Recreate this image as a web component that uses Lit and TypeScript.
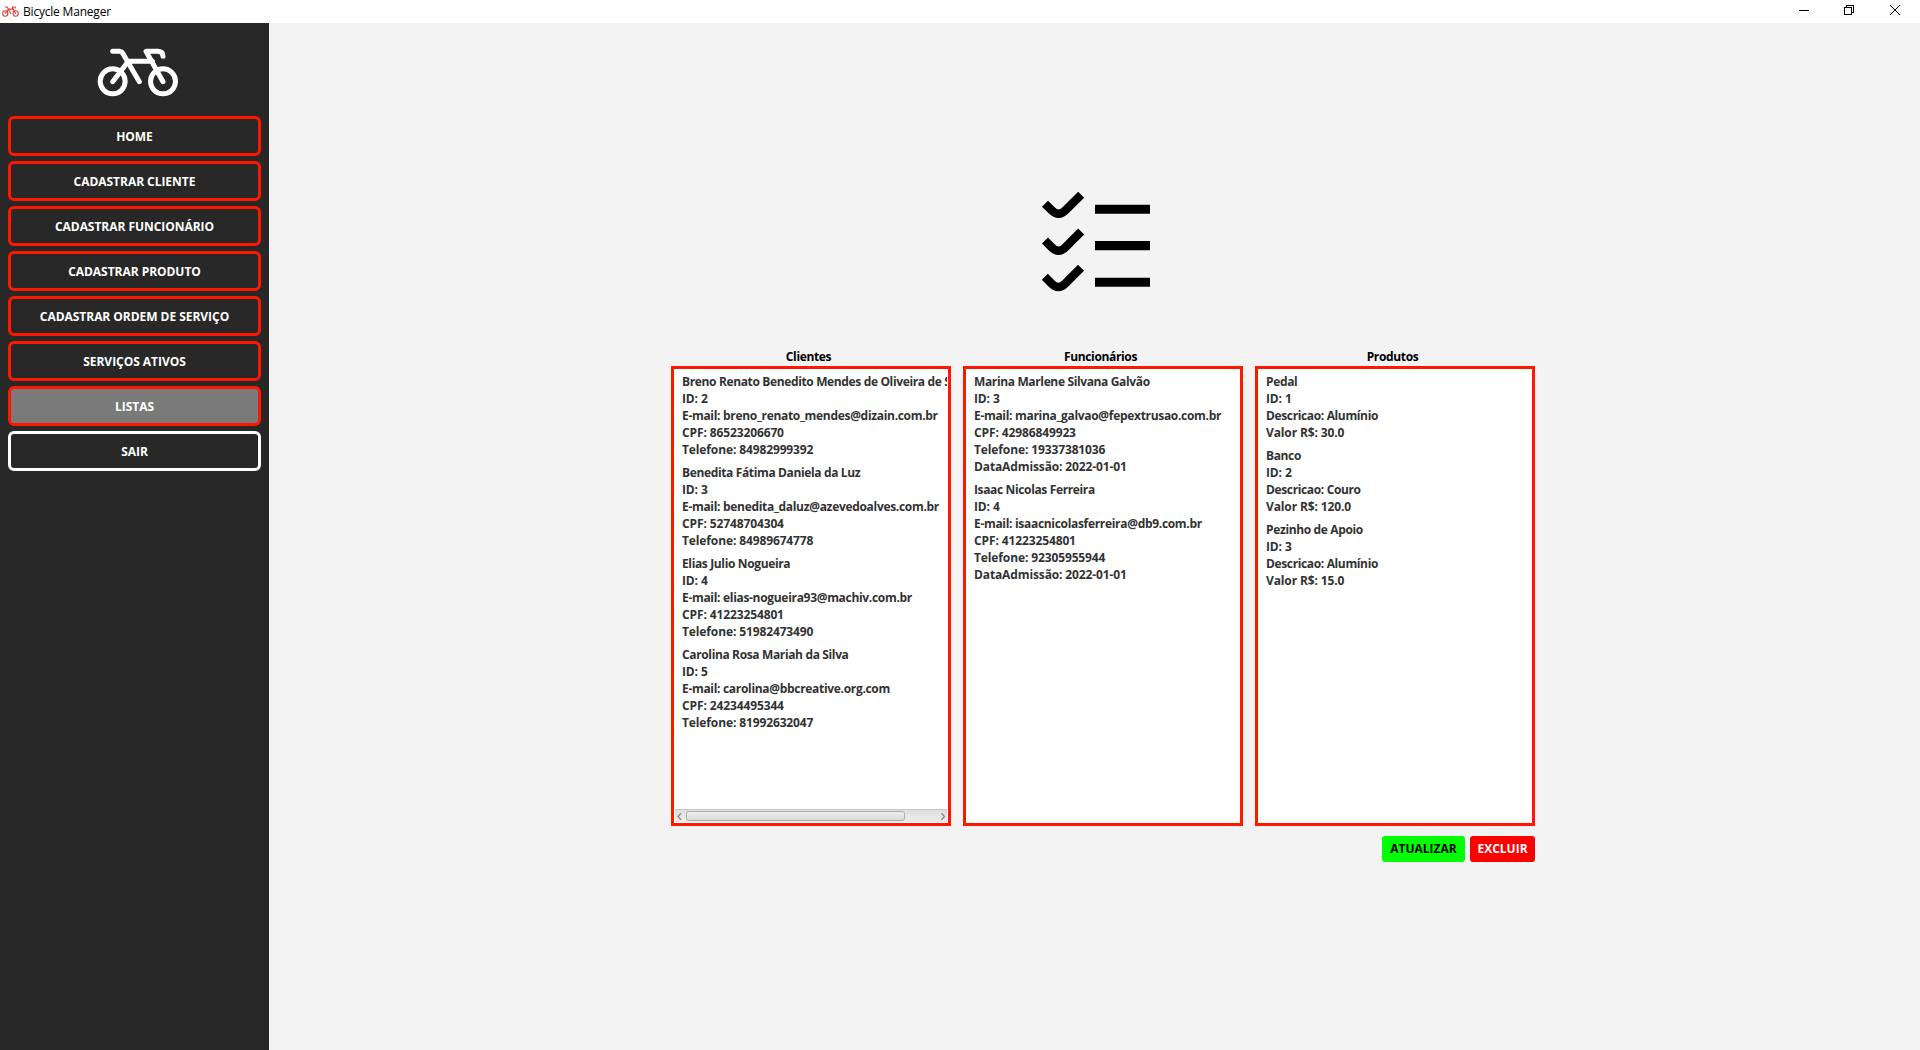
import { LitElement, html, css, svg } from "lit";
import { customElement, property } from "lit/decorators.js";
import { classMap } from "lit/directives/class-map.js";

const bike = svg`
  <g fill="none" stroke="currentColor" stroke-width="15" stroke-linecap="round" stroke-linejoin="round">
    <circle cx="98" cy="153" r="37.5"/>
    <circle cx="249" cy="153" r="37.5"/>
    <path d="M98 154 L145 93 H217"/>
    <path d="M98 63 H118 Q125 63 129 70 L178 154"/>
    <path d="M249 154 L198 63 H234 Q249 64 249 78"/>
  </g>`;

interface NavItem {
  label: string;
  kind?: "active" | "exit";
}

const NAV: NavItem[] = [
  { label: "HOME" },
  { label: "CADASTRAR CLIENTE" },
  { label: "CADASTRAR FUNCIONÁRIO" },
  { label: "CADASTRAR PRODUTO" },
  { label: "CADASTRAR ORDEM DE SERVIÇO" },
  { label: "SERVIÇOS ATIVOS" },
  { label: "LISTAS", kind: "active" },
  { label: "SAIR", kind: "exit" },
];

const CLIENTES = [
  ["Breno Renato Benedito Mendes de Oliveira de Souza", "ID: 2", "E-mail: breno_renato_mendes@dizain.com.br", "CPF: 86523206670", "Telefone: 84982999392"],
  ["Benedita Fátima Daniela da Luz", "ID: 3", "E-mail: benedita_daluz@azevedoalves.com.br", "CPF: 52748704304", "Telefone: 84989674778"],
  ["Elias Julio Nogueira", "ID: 4", "E-mail: elias-nogueira93@machiv.com.br", "CPF: 41223254801", "Telefone: 51982473490"],
  ["Carolina Rosa Mariah da Silva", "ID: 5", "E-mail: carolina@bbcreative.org.com", "CPF: 24234495344", "Telefone: 81992632047"],
];

const FUNCIONARIOS = [
  ["Marina Marlene Silvana Galvão", "ID: 3", "E-mail: marina_galvao@fepextrusao.com.br", "CPF: 42986849923", "Telefone: 19337381036", "DataAdmissão: 2022-01-01"],
  ["Isaac Nicolas Ferreira", "ID: 4", "E-mail: isaacnicolasferreira@db9.com.br", "CPF: 41223254801", "Telefone: 92305955944", "DataAdmissão: 2022-01-01"],
];

const PRODUTOS = [
  ["Pedal", "ID: 1", "Descricao: Alumínio", "Valor R$: 30.0"],
  ["Banco", "ID: 2", "Descricao: Couro", "Valor R$: 120.0"],
  ["Pezinho de Apoio", "ID: 3", "Descricao: Alumínio", "Valor R$: 15.0"],
];

@customElement("record-list")
class RecordList extends LitElement {
  @property() heading = "";
  @property({ attribute: false }) records: string[][] = [];
  @property({ type: Boolean }) scroll = false;

  static styles = css`
    :host { display: flex; flex-direction: column; width: 280px; }
    .heading {
      height: 17px; line-height: 17px; text-align: center; color: #000; margin-bottom: 1px;
      padding-right: 5px; letter-spacing: -0.35px;
    }
    .box {
      box-sizing: border-box; height: 460px; border: 3px solid #ff1700; background: #fff;
      padding: 1px; display: flex; flex-direction: column; color: #323232;
    }
    .cells { flex: 1; overflow: hidden; }
    .cell { padding: 3px 7px; }
    .line { height: 17px; line-height: 17px; white-space: pre; letter-spacing: -0.36px; }
    .line.email { letter-spacing: -0.31px; }
    .line.numeric { letter-spacing: -0.12px; }
    .bar {
      height: 13px; box-sizing: border-box; border-top: 1px solid #c8c8c8; display: flex; align-items: center;
      background: linear-gradient(#dedede, #ececec);
    }
    .thumb {
      box-sizing: border-box; width: 219px; height: 10px; border: 1px solid #adadad; border-radius: 2.5px;
      background: linear-gradient(#efefef, #d9d9d9);
    }
    .arrow { width: 11px; height: 9px; flex: none; }
    .space { flex: 1; }
  `;

  private line(text: string) {
    const numeric = /: [\d.-]+$/.test(text);
    const email = text.includes("@");
    return html`<div class=${classMap({ line: true, numeric, email })}>${text}</div>`;
  }

  render() {
    return html`
      <div class="heading">${this.heading}</div>
      <div class="box">
        <div class="cells">
          ${this.records.map((r) => html`<div class="cell">${r.map((l) => this.line(l))}</div>`)}
        </div>
        ${this.scroll
          ? html`<div class="bar">
              <svg class="arrow" viewBox="0 0 11 9"><path d="M6 1.2 L3 4.5 L6 7.8" fill="none" stroke="#8a8a8a" stroke-width="1.3"/></svg>
              <div class="thumb"></div>
              <div class="space"></div>
              <svg class="arrow" viewBox="0 0 11 9"><path d="M5.5 1.2 L8.5 4.5 L5.5 7.8" fill="none" stroke="#8a8a8a" stroke-width="1.3"/></svg>
            </div>`
          : null}
      </div>`;
  }
}

@customElement("app-root")
class AppRoot extends LitElement {
  static styles = css`
    :host {
      display: flex; flex-direction: column; width: 1920px; height: 1050px; overflow: hidden;
      background: #f3f3f3; font-family: "Open Sans", "Noto Sans", sans-serif; font-size: 12px; font-weight: 700;
    }
    .titlebar { height: 23px; background: #fff; display: flex; align-items: center; flex: none; }
    .title-icon { width: 17px; height: 11px; margin-left: 2px; color: #e5352b; }
    .title { margin-left: 4px; font-size: 12px; font-weight: 400; color: #000; flex: 1; letter-spacing: -0.2px; }
    .controls { width: 138px; height: 23px; flex: none; }
    .body { flex: 1; display: flex; }
    .sidebar {
      width: 269px; background: #282828; box-sizing: border-box; padding: 25px 8px 0;
      display: flex; flex-direction: column; align-items: center; flex: none;
    }
    .logo { width: 82px; height: 50px; color: #fff; margin: 0 0 18px 7px; }
    .nav { display: flex; flex-direction: column; gap: 5px; width: 253px; }
    .item {
      box-sizing: border-box; height: 40px; border: 3px solid #ff1700; border-radius: 6px;
      display: flex; align-items: center; justify-content: center; color: #fff; letter-spacing: -0.04px;
    }
    .item.active { background: #7a7a7a; }
    .item.exit { border-color: #fff; }
    .main { flex: 1; display: flex; flex-direction: column; padding: 168px 0 0 402px; }
    .checks { width: 110px; height: 102px; margin: 0 0 55px 370px; display: block; }
    .lists { display: flex; gap: 12px; }
    .actions { display: flex; justify-content: flex-end; gap: 5px; width: 864px; margin-top: 10px; }
    .btn {
      box-sizing: border-box; height: 26px; padding-bottom: 1px; border-radius: 3px; letter-spacing: 0;
      display: flex; align-items: center; justify-content: center;
    }
    .update { width: 83px; background: #00ff00; color: #000; }
    .delete { width: 65px; background: #ff0000; color: #fff; }
  `;

  render() {
    const tick = svg`<path d="M75 102 L95 122 Q115.6 142.8 136.5 122 L183.5 75" fill="none" stroke="#000" stroke-width="25.5"/>`;
    return html`
      <div class="titlebar">
        <svg class="title-icon" viewBox="50 50 248 152" preserveAspectRatio="none">${bike}</svg>
        <div class="title">Bicycle Maneger</div>
        <svg class="controls" viewBox="0 0 138 23" fill="none" stroke="#000" shape-rendering="crispEdges">
          <path d="M17 10.5 H27"/>
          <path d="M62.5 7.5 H69.5 V14.5 H62.5 Z M64.5 7.5 V5.5 H71.5 V12.5 H69.5"/>
          <path d="M108 5 L118 15 M118 5 L108 15" shape-rendering="auto"/>
        </svg>
      </div>
      <div class="body">
        <div class="sidebar">
          <svg class="logo" viewBox="51 53 246 150">${bike}</svg>
          <div class="nav">
            ${NAV.map((n) => html`<div class=${classMap({ item: true, active: n.kind === "active", exit: n.kind === "exit" })}>${n.label}</div>`)}
          </div>
        </div>
        <div class="main">
          <svg class="checks" viewBox="63 64 330 306">
            ${tick}
            <g transform="translate(0 110.5)">${tick}</g>
            <g transform="translate(-0.5 219.5)">${tick}</g>
            <path d="M225 105 H390 V132 H225 Z M225 214 H390 V242 H225 Z M225 324 H390 V351 H225 Z"/>
          </svg>
          <div class="lists">
            <record-list heading="Clientes" .records=${CLIENTES} scroll></record-list>
            <record-list heading="Funcionários" .records=${FUNCIONARIOS}></record-list>
            <record-list heading="Produtos" .records=${PRODUTOS}></record-list>
          </div>
          <div class="actions">
            <div class="btn update">ATUALIZAR</div>
            <div class="btn delete">EXCLUIR</div>
          </div>
        </div>
      </div>`;
  }
}
